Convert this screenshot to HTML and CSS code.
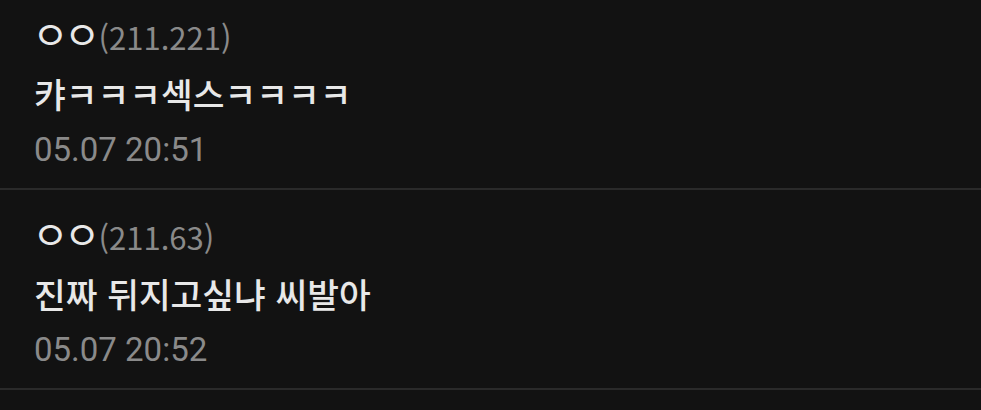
FILE: index.html
```html
<!DOCTYPE html>
<html lang="ko">
<head>
<meta charset="utf-8">
<link rel="stylesheet" href="styles.css">
</head>
<body>
<ul class="comments">
  <li class="comment">
    <div class="name"><span class="nick">ㅇㅇ</span><span class="ip">(211.221)</span></div>
    <div class="text">캬ㅋㅋㅋ섹스ㅋㅋㅋㅋ</div>
    <div class="date">05.07 20:51</div>
  </li>
  <li class="comment">
    <div class="name"><span class="nick">ㅇㅇ</span><span class="ip">(211.63)</span></div>
    <div class="text">진짜 뒤지고싶냐 씨발아</div>
    <div class="date">05.07 20:52</div>
  </li>
</ul>
</body>
</html>
```
FILE: styles.css
```css
html, body {
  margin: 0;
  padding: 0;
  background: #121212;
  overflow: hidden;
}
body {
  font-family: Roboto, "Noto Sans CJK KR", sans-serif;
  color: #e6e6e6;
}
.comments {
  list-style: none;
  margin: -10px 0 0 0;
  padding: 0;
}
.comment {
  padding: 19px 34px 10px 34px;
  border-bottom: 2px solid #2a2a2a;
}
.name {
  font-family: "Noto Sans CJK KR", sans-serif;
  font-size: 31px;
  line-height: 56px;
  height: 56px;
  color: #e8e8e8;
}
.nick {
  font-size: 40px;
  letter-spacing: -5px;
  margin-left: -2px;
  margin-right: 3px;
  line-height: 0;
}
.ip {
  color: #8a8a8a;
}
.text {
  font-family: "Noto Sans CJK KR", sans-serif;
  font-size: 34.5px;
  line-height: 57px;
  font-weight: 500;
  color: #e8e8e8;
}
.date {
  font-size: 33px;
  line-height: 56px;
  color: #8a8a8a;
}
```
